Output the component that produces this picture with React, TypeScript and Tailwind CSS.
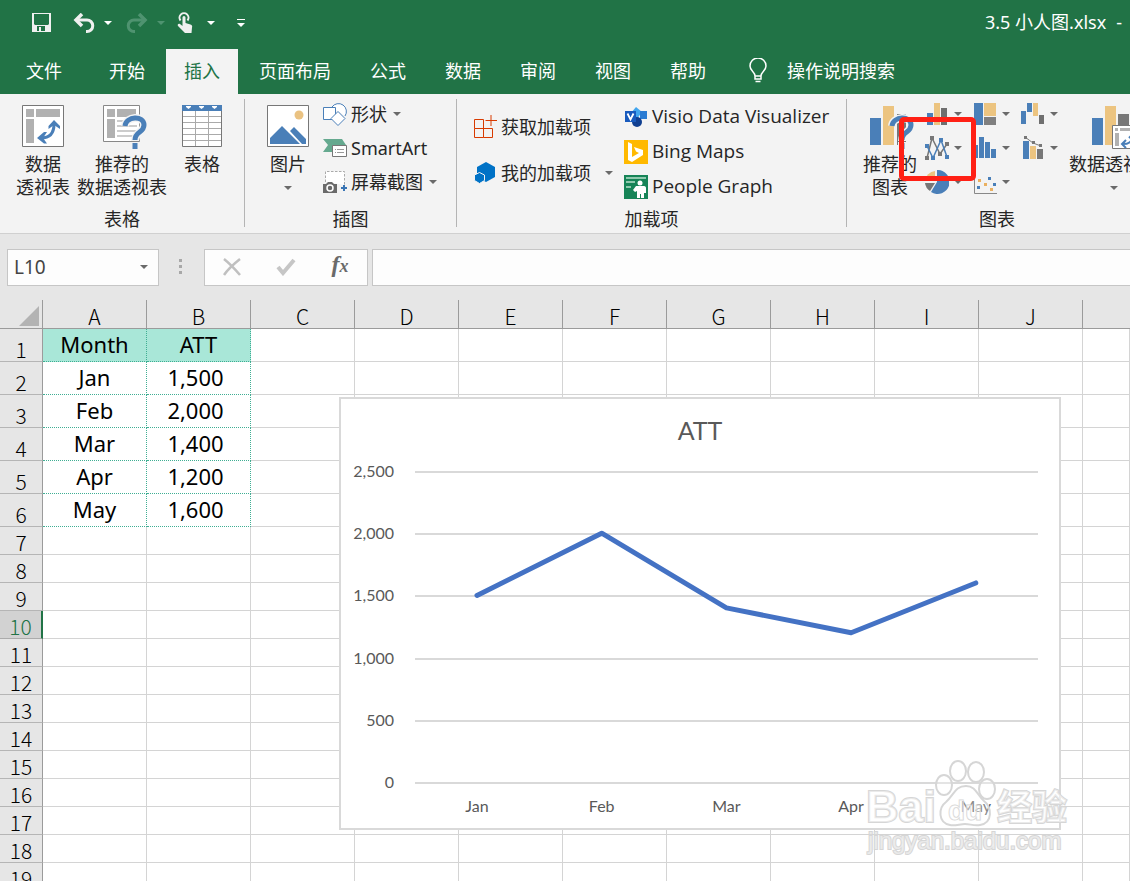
import type { ReactNode } from 'react';

const columns = ['A', 'B', 'C', 'D', 'E', 'F', 'G', 'H', 'I', 'J', 'K'];

const tabs = ['开始', '插入', '页面布局', '公式', '数据', '审阅', '视图', '帮助'];

const data = [
  ['Month', 'ATT'],
  ['Jan', '1,500'],
  ['Feb', '2,000'],
  ['Mar', '1,400'],
  ['Apr', '1,200'],
  ['May', '1,600'],
];

const series = [
  { month: 'Jan', value: 1500 },
  { month: 'Feb', value: 2000 },
  { month: 'Mar', value: 1400 },
  { month: 'Apr', value: 1200 },
  { month: 'May', value: 1600 },
];

function Arrow({ className = 'text-[#6a6a6a]' }: { className?: string }) {
  return (
    <svg width="8" height="4" viewBox="0 0 8 4" className={`shrink-0 ${className}`}>
      <path d="M0 0h8L4 4z" fill="currentColor" />
    </svg>
  );
}

function TitleBar() {
  return (
    <div className="flex items-center justify-between h-11 pl-8 pr-2">
      <div className="flex items-center pt-[2px]">
        <button aria-label="保存">
          <svg width="20" height="20" viewBox="0 0 20 20">
            <path d="M0 0h19v19H0z" fill="#f0f0f0" />
            <path d="M2 1h15v10l-1 1H3l-1-1zM5 13h8v5H9v-4H7v4H5z" fill="#217346" />
            <path d="M7 14h2v4H7z" fill="#f0f0f0" />
          </svg>
        </button>
        <button aria-label="撤消" className="ml-[21px] flex items-center gap-2">
          <svg width="23" height="20" viewBox="0 0 23 20" fill="none" stroke="#f0f0f0" strokeWidth="3">
            <path d="M3 7h11a5.500 5.500 0 0 1 0 11.500h-1" />
            <path d="M9 1L3 7l6 6" strokeWidth="3.500" />
          </svg>
          <Arrow className="text-white" />
        </button>
        <button aria-label="恢复" className="ml-[14px] flex items-center gap-2">
          <svg width="23" height="20" viewBox="0 0 23 20" fill="none" stroke="#4f9370" strokeWidth="3">
            <path d="M20 7H8a5.500 5.500 0 0 0 0 11.500h1" />
            <path d="M13 1l6 6-6 6" strokeWidth="3.500" />
          </svg>
          <Arrow className="text-[#4f9370]" />
        </button>
        <button aria-label="触摸/鼠标模式" className="ml-3 flex items-center gap-[14px]">
          <svg width="16" height="22" viewBox="0 0 16 22">
            <path d="M3.500 8.500a4.500 4.500 0 1 1 7 0" fill="none" stroke="#f0f0f0" strokeWidth="2" />
            <path
              d="M5.500 5.500a1.500 1.500 0 0 1 3 0V11l5 1.500c1.500.5 2 1.500 1.500 3L14.500 21H8l-7-7c-1-1.500.5-3 2-2l2.500 2z"
              fill="#f0f0f0"
            />
          </svg>
          <Arrow className="text-white" />
        </button>
        <button aria-label="自定义快速访问工具栏" className="ml-[22px]">
          <svg width="8" height="8" viewBox="0 0 8 8" fill="#fff">
            <path d="M0 0h8v1H0zM0 4h8L4 8z" />
          </svg>
        </button>
      </div>
      <div className="flex gap-[10px] text-lg text-white">
        <span>3.5 小人图.xlsx</span>
        <span>-</span>
      </div>
    </div>
  );
}

function Tabs() {
  return (
    <nav className="flex items-end gap-[3px] h-[50px] text-lg text-white whitespace-nowrap">
      <button className="w-[88px] h-[45px] pb-[2px]">文件</button>
      {tabs.map((tab) => (
        <button
          key={tab}
          className={
            tab === '插入'
              ? 'h-[45px] px-[18px] pb-[2px] bg-[#f3f3f3] text-[#217346]'
              : 'h-[45px] px-[18px] pb-[2px]'
          }
        >
          {tab}
        </button>
      ))}
      <button className="h-[45px] ml-[22px] pb-[2px] flex items-center gap-5">
        <svg width="18" height="25" viewBox="0 0 18 25" fill="none" stroke="#fff" strokeWidth="1.500">
          <path d="M6 18c0-4-5-5-5-10a8 8 0 0 1 16 0c0 5-5 6-5 10zM6 18v3h6v-3M6.500 23.500h5" />
        </svg>
        操作说明搜索
      </button>
    </nav>
  );
}

function Group({ label, className, labelClass = '', children }: {
  label: string;
  className: string;
  labelClass?: string;
  children: ReactNode;
}) {
  return (
    <section className={`flex flex-col shrink-0 h-32 ${className}`}>
      <div className="flex flex-1 items-start">{children}</div>
      <div className={`text-center leading-4 ${labelClass}`}>{label}</div>
    </section>
  );
}

function BigButton({ icon, lines, arrow, className }: {
  icon: ReactNode;
  lines: string[];
  arrow?: boolean;
  className: string;
}) {
  return (
    <button className={`flex flex-col items-center shrink-0 pt-[6px] leading-[23px] whitespace-nowrap ${className}`}>
      <span className="flex h-12">{icon}</span>
      {lines.map((line) => (
        <span key={line}>{line}</span>
      ))}
      {arrow && (
        <span className="flex h-[23px] items-center">
          <Arrow />
        </span>
      )}
    </button>
  );
}

function SmallButton({ icon, label, arrow, height = 'h-[34px]' }: {
  icon: ReactNode;
  label: string;
  arrow?: boolean;
  height?: string;
}) {
  return (
    <button className={`flex items-center gap-1 whitespace-nowrap ${height}`}>
      <span className="w-6 flex justify-center">{icon}</span>
      {label}
      {arrow && (
        <span className="pl-[2px]">
          <Arrow />
        </span>
      )}
    </button>
  );
}

function PivotIcon() {
  return (
    <svg width="42" height="42" viewBox="0 0 42 42">
      <path d="M.5.5h41v41H.5z" fill="#fff" stroke="#777" />
      <path d="M4 4h8v8H4zM14 4h24v8H14zM4 14h8v24H4z" fill="#b1b1b1" />
      <path d="M19 33c9 0 13-5 13-14" fill="none" stroke="#4a7fb8" strokeWidth="3" />
      <path d="M26.500 21l5.500-6 6 6v3l-6-4-5.500 4zM22 27l-7 6 7 5.500h3L21 33l4-6z" fill="#4a7fb8" />
    </svg>
  );
}

function RecommendedPivotIcon() {
  return (
    <svg width="44" height="44" viewBox="0 0 44 44" className="ml-[5px]">
      <path d="M.5.500h36v36H.5z" fill="#fff" stroke="#888" />
      <path d="M4 4h8v8H4zM14 4h19v8H14zM4 14h8v19H4z" fill="#b1b1b1" />
      <path d="M14 16h20M14 21h20M14 26h20M14 31h20" stroke="#ccc" strokeWidth="2" />
      <QuestionMark x={20} y={11} />
    </svg>
  );
}

function QuestionMark({ x, y }: { x: number; y: number }) {
  return (
    <g transform={`translate(${x} ${y})`} fill="none">
      <path d="M2 10c1-10 19-11 19-1 0 8-9 6-9 16M12 26v8" stroke="#f3f3f3" strokeWidth="8" />
      <path d="M2 10c1-10 19-11 19-1 0 8-9 6-9 15" stroke="#4a7fb8" strokeWidth="5" />
      <path d="M12 27v6" stroke="#4a7fb8" strokeWidth="5" />
    </g>
  );
}

function TableIcon() {
  return (
    <svg width="40" height="42" viewBox="0 0 40 42">
      <path d="M.5.500h39v41H.5z" fill="#fff" stroke="#777" />
      <path d="M0 0h40v6H0z" fill="#4a7fb8" />
      <path d="M4 1h5v1L6.500 4 4 2zM17 1h5v1l-2.500 2L17 2zM30 1h5v1l-2.500 2L30 2z" fill="#fff" />
      <path d="M1 11.500h38M1 17.500h38M1 23.500h38M1 29.500h38M1 35.500h38M13.500 6v35M26.500 6v35" stroke="#aaa" />
    </svg>
  );
}

function PictureIcon() {
  return (
    <svg width="42" height="42" viewBox="0 0 42 42">
      <path d="M.5.5h41v41H.5z" fill="#fff" stroke="#777" />
      <circle cx="32" cy="10" r="4.500" fill="#eac282" />
      <path d="M3 39v-6l12-12 18 18zM23 26l4-4 12 12v5h-4z" fill="#4a7fb8" />
    </svg>
  );
}

function ShapesIcon() {
  return (
    <svg width="24" height="24" viewBox="0 0 24 24" fill="#fff" stroke="#4a7fb8">
      <path d="M9 5a7.500 7.500 0 1 1 13 9" />
      <path d="M.5 5.500h12v12H.5z" />
      <path d="M15 9.500l7 7-7 7-7-7z" />
    </svg>
  );
}

function SmartArtIcon() {
  return (
    <svg width="24" height="20" viewBox="0 0 24 20">
      <path d="M0 1h19l4 6-5 7H0l5-7z" fill="#65a98f" />
      <path d="M9.500 7.500h14v11h-14z" fill="#fff" stroke="#777" />
      <path d="M12 11.500h1M14 11.500h7M12 14.500h1M14 14.500h7" stroke="#999" />
    </svg>
  );
}

function ScreenshotIcon() {
  return (
    <svg width="24" height="24" viewBox="0 0 24 24">
      <path d="M2.500 12V1.500h19V15" fill="#fff" stroke="#aaa" strokeDasharray="2.500 1.500" />
      <path d="M0 14h3l2-2h4l2 2h3v9H0z" fill="#6a6a6a" />
      <circle cx="7" cy="18" r="3" fill="none" stroke="#fff" strokeWidth="1.500" />
      <path d="M18 18h6M21 15v6" stroke="#3a75b5" strokeWidth="2" />
    </svg>
  );
}

function StoreIcon() {
  return (
    <svg width="24" height="24" viewBox="0 0 24 24" fill="none" stroke="#d83b01">
      <path d="M1.500 13.500V4.500h9v18h-9zM1.500 13.500h18v9h-9M18 0v11M12.500 5.500H24" />
    </svg>
  );
}

function MyAddinsIcon() {
  return (
    <svg width="22" height="22" viewBox="0 0 22 22" fill="#0072c6">
      <path d="M12 0l9 5v10l-9 5-9-5V5z" />
      <path d="M5.500 10.500l5 2.500v5.500l-5 3-5-3V13z" stroke="#f3f3f3" />
    </svg>
  );
}

function VisioIcon() {
  return (
    <svg width="22" height="20" viewBox="0 0 22 20">
      <path d="M11 0l6 5-5 7-6-6z" fill="#41a5ee" />
      <path d="M15 4h7v8h-7z" fill="#2b7cd3" />
      <circle cx="12" cy="15" r="5" fill="#103f91" />
      <path d="M0 4h11v11H0z" fill="#185abd" />
      <path d="M2.500 6.500l3 6 3-6" fill="none" stroke="#fff" strokeWidth="1.800" />
    </svg>
  );
}

function BingIcon() {
  return (
    <svg width="24" height="24" viewBox="0 0 24 24">
      <path d="M0 0h24v24H0z" fill="#ffb900" />
      <path d="M4 2l4 2v13l7-4-3-1.500-2-4.500 9 3v5L8 22l-4-2z" fill="#fff" />
    </svg>
  );
}

function PeopleIcon() {
  return (
    <svg width="24" height="24" viewBox="0 0 24 24">
      <path d="M0 0h24v24H0z" fill="#168457" />
      <path d="M2 2h20v2H2zM2 6h9v2H2zM2 11h5v2H2z" fill="#8fc9ae" />
      <circle cx="16" cy="8" r="2.500" fill="#fff" />
      <path d="M12 11h8c1.500 0 2 1 2 2v5h-2v5h-3v-4h-1v4h-3v-7l-2 1-2-2z" fill="#fff" />
    </svg>
  );
}

function RecommendedChartIcon() {
  return (
    <svg width="44" height="44" viewBox="0 0 44 44" className="ml-1">
      <path d="M0 13h11v27H0z" fill="#4a7fb8" />
      <path d="M13 1h11v39H13z" fill="#ecc480" />
      <path d="M27 9h9v31h-9z" fill="#777" />
      <QuestionMark x={20} y={11} />
    </svg>
  );
}

function PivotChartIcon() {
  return (
    <svg width="44" height="44" viewBox="0 0 44 44">
      <path d="M0 13h11v27H0z" fill="#4a7fb8" />
      <path d="M13 1h11v39H13z" fill="#ecc480" />
      <path d="M26 9h11v11H26z" fill="#777" />
      <path d="M20.500 20.500h23v23h-23z" fill="#fff" stroke="#777" />
      <path d="M23 23h3v3h-3zM28 23h15v3H28zM23 28h4v13h-4z" fill="#b1b1b1" />
      <path d="M31 39c6 0 9-2 9-8M34 35l-4 4 4 4M37 33l3-3 3 3" fill="none" stroke="#4a7fb8" strokeWidth="2" />
    </svg>
  );
}

const chartIcons: { name: string; icon: ReactNode }[] = [
  {
    name: '柱形图',
    icon: (
      <>
        <path d="M2 11h6v12H2z" fill="#4a7fb8" />
        <path d="M9 1h6v22H9z" fill="#ecc480" />
        <path d="M16 6h6v17h-6z" fill="#6f6f6f" />
      </>
    ),
  },
  {
    name: '层次结构图',
    icon: (
      <>
        <path d="M1 1h9v22H1z" fill="#4a7fb8" />
        <path d="M11 1h12v13H11z" fill="#ecc480" />
        <path d="M11 15h12v8H11z" fill="#7f7f7f" />
      </>
    ),
  },
  {
    name: '瀑布图',
    icon: (
      <>
        <path d="M0 9h5v13H0zM6 1h5v9H6z" fill="#4a7fb8" />
        <path d="M12 1h5v13h-5z" fill="#ecc480" />
        <path d="M18 13h5v9h-5z" fill="#6f6f6f" />
      </>
    ),
  },
  {
    name: '折线图',
    icon: (
      <>
        <path d="M2 22L7 2l8 16 7-10" fill="none" stroke="#777" strokeWidth="1.500" />
        <path d="M2 10l6 12 8-18 6 17" fill="none" stroke="#4a7fb8" strokeWidth="1.500" />
        <path d="M0 20h4v4H0zM5 0h4v4H5zM13 16h4v4h-4zM20 6h4v4h-4z" fill="#777" />
        <path d="M0 8h4v4H0zM6 20h4v4H6zM14 2h4v4h-4zM20 19h4v4h-4z" fill="#4a7fb8" />
      </>
    ),
  },
  {
    name: '统计图',
    icon: <path d="M0 9h5v13H0zM6 1h5v21H6zM12 6h5v16h-5zM18 13h5v9h-5z" fill="#4a7fb8" />,
  },
  {
    name: '组合图',
    icon: (
      <>
        <path d="M2 5h6v18H2z" fill="#4a7fb8" />
        <path d="M9 10h6v13H9z" fill="#ecc480" />
        <path d="M16 13h6v10h-6z" fill="#777" />
        <path d="M4 1l8 6 8 3" fill="none" stroke="#777" />
        <path d="M3 0h3v3H3zM11 5h3v3h-3zM18 8h3v3h-3z" fill="#777" />
      </>
    ),
  },
  {
    name: '饼图',
    icon: (
      <>
        <path d="M12 0a12 12 0 1 1-6 22l6-10z" fill="#4a7fb8" />
        <path d="M10 1v10H0A11 11 0 0 1 10 1z" fill="#ecc480" />
        <path d="M0 13h10l-5 8a11 11 0 0 1-5-8z" fill="#777" />
      </>
    ),
  },
  {
    name: '散点图',
    icon: (
      <>
        <path d="M1.500 0v23.500H24" fill="none" stroke="#888" />
        <path d="M4 16h3v3H4zM15 7h3v3h-3zM20 13h3v3h-3z" fill="#4a7fb8" />
        <path d="M5 9h3v3H5zM11 13h3v3h-3zM17 18h3v3h-3z" fill="#eab060" />
      </>
    ),
  },
];

function Ribbon() {
  return (
    <div className="flex pt-[5px] h-[140px] overflow-hidden bg-[#f3f3f3] border-b border-[#d0d0d0] text-lg text-[#262626]">
      <Group label="表格" className="w-[245px] border-r border-[#b4b4b4]">
        <BigButton className="w-[76px] ml-[5px]" icon={<PivotIcon />} lines={['数据', '透视表']} />
        <BigButton className="w-[82px]" icon={<RecommendedPivotIcon />} lines={['推荐的', '数据透视表']} />
        <BigButton className="w-[78px]" icon={<TableIcon />} lines={['表格']} />
      </Group>

      <Group label="插图" className="w-[212px] border-r border-[#b4b4b4]">
        <BigButton className="w-[62px] ml-3" icon={<PictureIcon />} lines={['图片']} arrow />
        <div className="flex flex-col ml-1 -mt-[2px]">
          <SmallButton icon={<ShapesIcon />} label="形状" arrow />
          <SmallButton icon={<SmartArtIcon />} label="SmartArt" />
          <SmallButton icon={<ScreenshotIcon />} label="屏幕截图" arrow />
        </div>
      </Group>

      <Group label="加载项" className="w-[390px] border-r border-[#b4b4b4]">
        <div className="flex flex-col gap-3 pt-[11px] ml-4 w-[151px]">
          <SmallButton icon={<StoreIcon />} label="获取加载项" />
          <div className="flex items-center">
            <SmallButton icon={<MyAddinsIcon />} label="我的加载项" />
            <button aria-label="更多加载项" className="pl-[14px]">
              <Arrow />
            </button>
          </div>
        </div>
        <div className="flex flex-col font-['Open_Sans',sans-serif] text-[19px]">
          <SmallButton icon={<VisioIcon />} label="Visio Data Visualizer" height="h-[35px]" />
          <SmallButton icon={<BingIcon />} label="Bing Maps" height="h-[35px]" />
          <SmallButton icon={<PeopleIcon />} label="People Graph" height="h-[35px]" />
        </div>
      </Group>

      <Group label="图表" className="w-[320px]" labelClass="pr-5">
        <BigButton className="w-[62px] ml-3" icon={<RecommendedChartIcon />} lines={['推荐的', '图表']} />
        <div className="relative ml-1 -mt-[2px]">
          <div className="grid grid-cols-[48px_48px_48px]">
            {chartIcons.map((chart) => (
              <button key={chart.name} aria-label={chart.name} className="flex items-center gap-[5px] h-[34px]">
                <svg width="24" height="24" viewBox="0 0 24 24">
                  {chart.icon}
                </svg>
                <Arrow />
              </button>
            ))}
          </div>
          <div className="absolute -left-[26px] top-5 w-[77px] h-16 rounded-[5px] border-5 border-[#ff2015]" />
        </div>
        <BigButton className="w-[90px]" icon={<PivotChartIcon />} lines={['数据透视图']} arrow />
      </Group>
    </div>
  );
}

function FormulaBar() {
  return (
    <div className="flex items-center h-[66px]">
      <div className="flex items-center ml-[7px] w-[152px] h-[37px] bg-[#fdfdfd] border border-[#c6c6c6] pr-[10px]">
        <input
          aria-label="名称框"
          defaultValue="L10"
          className="min-w-0 flex-1 bg-transparent pl-[6px] text-[19px] text-[#444] outline-none"
        />
        <button aria-label="名称列表">
          <Arrow />
        </button>
      </div>
      <svg width="4" height="16" viewBox="0 0 4 16" className="ml-5" fill="#a8a8a8">
        <path d="M0 0h3v3H0zM0 6h3v3H0zM0 12h3v3H0z" />
      </svg>
      <div className="flex items-center ml-[21px] w-[164px] h-[37px] bg-[#fdfdfd] border border-[#c6c6c6]">
        <button aria-label="取消" className="w-[54px] flex justify-center">
          <svg width="18" height="18" viewBox="0 0 18 18" fill="none" stroke="#c0c0c0" strokeWidth="2.500">
            <path d="M1 1c5 4 10 9 16 16M17 1C12 5 5 11 1 17" />
          </svg>
        </button>
        <button aria-label="输入" className="w-[54px] flex justify-center">
          <svg width="20" height="18" viewBox="0 0 20 18" fill="none" stroke="#c6c6c6" strokeWidth="4">
            <path d="M2 9l5 6L18 2" />
          </svg>
        </button>
        <button
          aria-label="插入函数"
          className="w-[54px] pb-1 font-['Liberation_Serif',serif] italic font-bold text-2xl leading-7 text-[#6a6a6a]"
        >
          f<span className="text-lg">x</span>
        </button>
      </div>
      <input
        aria-label="编辑栏"
        className="ml-1 flex-1 min-w-0 h-[37px] bg-[#fdfdfd] border border-r-0 border-[#c6c6c6] px-2 text-lg outline-none"
      />
    </div>
  );
}

function cellClass(row: number, col: number) {
  if (row > 6 || col > 1) {
    return 'border-r border-b border-[#d4d4d4]';
  }
  const base = 'border-r border-b border-dotted border-[#3fae93] p-0 text-center align-top';
  const fill = row === 1 ? ' bg-[#a9e7d8]' : '';
  const shift = row > 1 && col === 1 ? ' pr-[6px]' : '';
  return base + fill + shift;
}

function rowHeadClass(row: number) {
  const base = "p-0 border-b font-['Noto_Sans_CJK_SC',sans-serif] font-light text-[21px] leading-6 align-bottom";
  return row === 10
    ? `${base} bg-[#d2d2d2] border-r-2 border-r-[#217346] border-b-[#ababab] text-[#217346]`
    : `${base} bg-[#e6e6e6] border-r border-r-[#9b9b9b] border-b-[#b5b5b5]`;
}

function Sheet() {
  const rows = Array.from({ length: 19 }, (_, i) => i + 1);

  return (
    <table className="w-full table-fixed border-separate border-spacing-0 bg-white text-black">
      <colgroup>
        <col className="w-[43px]" />
        {columns.map((name) => (
          <col key={name} className={name === 'K' ? '' : 'w-[104px]'} />
        ))}
      </colgroup>
      <thead>
        <tr className="h-[29px] bg-[#e6e6e6]">
          <th className="p-0 border-r border-b border-[#9b9b9b]">
            <svg width="20" height="20" viewBox="0 0 20 20" className="ml-auto mr-[3px] mt-1">
              <path d="M20 0v20H0z" fill="#b3b3b3" />
            </svg>
          </th>
          {columns.map((name) => (
            <th
              key={name}
              className={
                name === 'K'
                  ? 'p-0 border-b border-[#9b9b9b]'
                  : "p-0 pt-1 border-r border-b border-[#9b9b9b] font-['Noto_Sans_CJK_SC',sans-serif] font-light text-[21px] leading-6"
              }
            >
              {name === 'K' ? '' : name}
            </th>
          ))}
        </tr>
      </thead>
      <tbody>
        {rows.map((row) => (
          <tr key={row} className={row < 7 ? 'h-[33px]' : 'h-[28px]'}>
            <th className={rowHeadClass(row)}>{row}</th>
            {columns.map((name, col) => (
              <td key={name} className={cellClass(row, col)}>
                {col < 2 && data[row - 1] ? (
                  <span className="block text-[22px] leading-[30px]">{data[row - 1][col]}</span>
                ) : null}
              </td>
            ))}
          </tr>
        ))}
      </tbody>
    </table>
  );
}

function LineChart() {
  const x = (i: number) => 138 + i * 124.7;
  const y = (value: number) => 385 - (value / 500) * 62.2;
  const points = series.map((p, i) => `${x(i)},${y(p.value)}`).join(' ');

  return (
    <svg
      width="722"
      height="433"
      viewBox="0 0 722 433"
      className="absolute left-[339px] top-[97px] font-[Lato,sans-serif]"
    >
      <rect x="1" y="1" width="720" height="431" fill="#fff" stroke="#d9d9d9" strokeWidth="2" />
      <text x="361" y="43" textAnchor="middle" fontSize="25" fill="#595959">
        ATT
      </text>
      {[0, 500, 1000, 1500, 2000, 2500].map((tick) => (
        <g key={tick}>
          <path d={`M76 ${Math.round(y(tick)) + 1}H699`} stroke="#d9d9d9" strokeWidth="2" />
          <text x="55" y={Math.round(y(tick)) + 6} textAnchor="end" fontSize="16" fill="#595959">
            {tick.toLocaleString('en-US')}
          </text>
        </g>
      ))}
      {series.map((p, i) => (
        <text key={p.month} x={x(i)} y="415" textAnchor="middle" fontSize="16" fill="#595959">
          {p.month}
        </text>
      ))}
      <polyline
        points={points}
        fill="none"
        stroke="#4472c4"
        strokeWidth="5"
        strokeLinecap="round"
        strokeLinejoin="round"
      />
    </svg>
  );
}

function Watermark() {
  return (
    <svg
      width="210"
      height="104"
      viewBox="0 0 210 104"
      className="absolute left-[864px] top-[456px] font-['Liberation_Sans','Noto_Sans_CJK_SC',sans-serif]"
    >
      <g fill="#fff" fillOpacity="0.3" stroke="#d6d6d6" strokeWidth="2">
        <ellipse cx="80" cy="29" rx="8" ry="10" />
        <ellipse cx="94" cy="15" rx="8" ry="10" />
        <ellipse cx="112" cy="16" rx="8" ry="10" />
        <ellipse cx="123" cy="33" rx="8" ry="10" />
        <path d="M102 30c10 0 11 9 18 15 8 6 9 22-4 24-6 1-10-1-15-1s-10 2-15 1c-12-2-12-17-4-23 8-7 9-16 20-16z" />
      </g>
      <g fill="#fff" fillOpacity="0.5" stroke="#d6d6d6" strokeWidth="2" paintOrder="stroke" fontWeight="700">
        <text x="2" y="66" fontSize="45">Bai</text>
        <text x="84" y="64" fontSize="28" strokeWidth="1" fillOpacity="0.3">du</text>
        <text x="133" y="64" fontSize="35">经验</text>
        <text x="4" y="93" fontSize="24" fontWeight="400">jingyan.baidu.com</text>
      </g>
    </svg>
  );
}

export default function App() {
  return (
    <div className="flex flex-col h-screen overflow-hidden bg-[#e6e6e6] font-['Noto_Sans','Noto_Sans_CJK_SC',sans-serif]">
      <header className="bg-[#217346]">
        <TitleBar />
        <Tabs />
      </header>
      <Ribbon />
      <FormulaBar />
      <main className="relative flex-1 min-h-0 overflow-hidden">
        <Sheet />
        <LineChart />
        <Watermark />
      </main>
    </div>
  );
}
